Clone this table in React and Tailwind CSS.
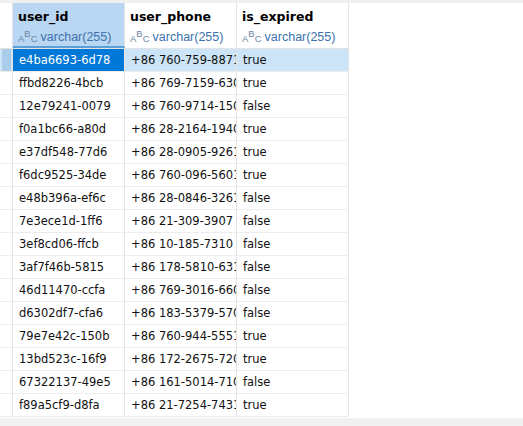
import React from "react";

const rows = [
  ["e4ba6693-6d78", "+86 760-759-8871", "true"],
  ["ffbd8226-4bcb", "+86 769-7159-6301", "true"],
  ["12e79241-0079", "+86 760-9714-1502", "false"],
  ["f0a1bc66-a80d", "+86 28-2164-1940", "true"],
  ["e37df548-77d6", "+86 28-0905-9261", "true"],
  ["f6dc9525-34de", "+86 760-096-5601", "true"],
  ["e48b396a-ef6c", "+86 28-0846-3261", "false"],
  ["7e3ece1d-1ff6", "+86 21-309-3907", "false"],
  ["3ef8cd06-ffcb", "+86 10-185-7310", "false"],
  ["3af7f46b-5815", "+86 178-5810-6312", "false"],
  ["46d11470-ccfa", "+86 769-3016-6601", "false"],
  ["d6302df7-cfa6", "+86 183-5379-5701", "false"],
  ["79e7e42c-150b", "+86 760-944-5551", "true"],
  ["13bd523c-16f9", "+86 172-2675-7201", "true"],
  ["67322137-49e5", "+86 161-5014-7101", "false"],
  ["f89a5cf9-d8fa", "+86 21-7254-7431", "true"],
];

const columns = ["user_id", "user_phone", "is_expired"];

// small "ABC" string-type marker + type name under each column name
function TypeLabel() {
  return (
    <div
      className="flex items-end gap-[3px] leading-none"
      style={{ fontFamily: '"Liberation Sans", Arial, sans-serif' }}
    >
      <span className="flex items-start text-[9.5px] leading-none text-[#6b87a8] shrink-0">
        <span className="mt-[5px]">A</span>
        <span className="mt-0">B</span>
        <span className="mt-[5px]">C</span>
      </span>
      <span className="text-[12.5px] text-[#3d72ad] whitespace-nowrap">varchar(255)</span>
    </div>
  );
}

export default function App() {
  return (
    <div
      className="w-[523px] h-[426px] bg-white flex flex-col overflow-hidden"
      style={{ fontFamily: '"DejaVu Sans", sans-serif' }}
    >
      <div className="h-[3px] bg-[#f0f0f0] shrink-0" />
      <div className="flex-1 flex">
        <div className="flex flex-col w-[349px]">
          {/* header */}
          <div className="flex h-[46px] border-b border-[#e3e3e3]">
            <div className="w-[13px] border-r border-[#e3e3e3]" />
            {columns.map((c, i) => (
              <div
                key={c}
                className={
                  i === 0
                    ? "w-[112px] bg-[#b9d6f2] border-r border-[#e3e3e3] border-b-2 border-b-[#5b9fd8] pl-[5px] pt-[6px] flex flex-col gap-[4px] overflow-hidden"
                    : "w-[112px] border-r border-[#e3e3e3] pl-[5px] pt-[6px] flex flex-col gap-[4px] overflow-hidden"
                }
              >
                <div className="text-[12.5px] font-bold text-black leading-[16px]">{c}</div>
                <TypeLabel />
              </div>
            ))}
          </div>
          {rows.map((r, idx) => {
            const sel = idx === 0;
            return (
              <div
                key={idx}
                className={
                  sel
                    ? "flex h-[23px] border-b border-[#ededed] bg-[#cce4f7]"
                    : "flex h-[23px] border-b border-[#ededed] bg-white"
                }
              >
                <div className="w-[13px] border-r border-[#e3e3e3] flex">
                  {sel && <div className="ml-[2px] w-[9px] bg-[#aacdeb]" />}
                </div>
                {r.map((v, j) => (
                  <div
                    key={j}
                    className={
                      sel && j === 0
                        ? "w-[112px] bg-[#0078d7] text-white border-r border-[#e3e3e3] pl-[6px] text-[11.5px] leading-[22px] whitespace-nowrap overflow-hidden"
                        : "w-[112px] text-[#111] border-r border-[#e3e3e3] pl-[6px] text-[11.5px] leading-[22px] whitespace-nowrap overflow-hidden"
                    }
                  >
                    {v}
                  </div>
                ))}
              </div>
            );
          })}
        </div>
        <div className="flex-1" />
      </div>
      <div className="h-[8px] bg-[#f0f0f0] shrink-0" />
    </div>
  );
}
